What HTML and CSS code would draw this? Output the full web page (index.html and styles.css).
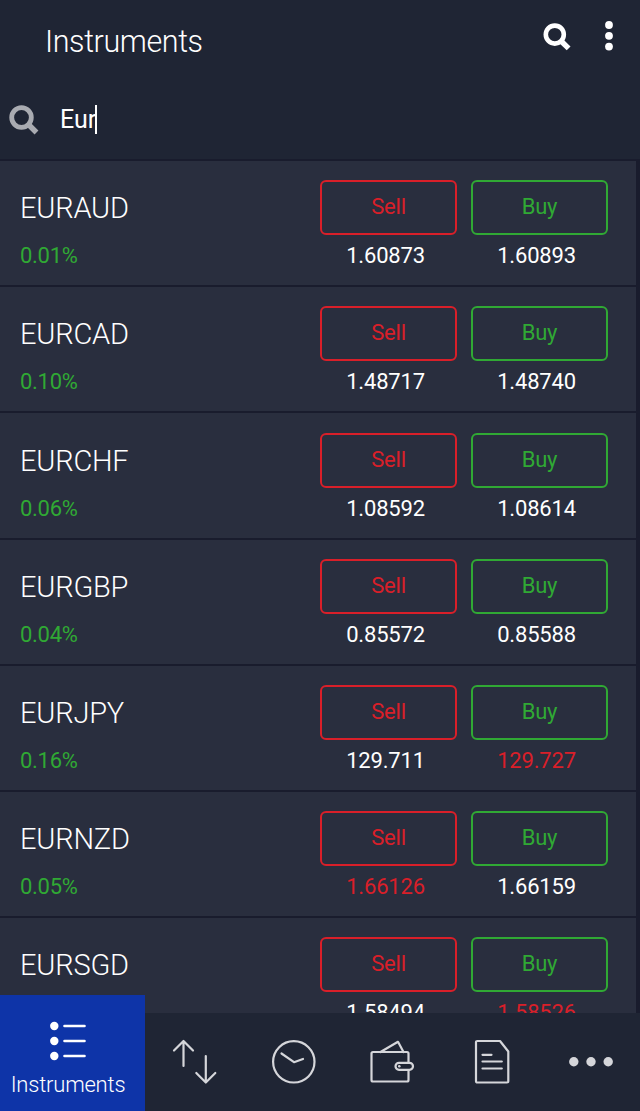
FILE: index.html
```html
<!DOCTYPE html>
<html lang="en">
<head>
  <meta charset="UTF-8" />
  <meta name="viewport" content="width=device-width, initial-scale=1" />
  <title>Instruments</title>
  <link rel="stylesheet" href="styles.css">
</head>
<body>
  <div class="app">
    <header class="header">
      <div class="topbar">
        <h1>Instruments</h1>
        <svg class="icon-search" width="28" height="28" viewBox="0 0 28 28">
          <circle cx="11.8" cy="11.6" r="9" fill="none" stroke="#fff" stroke-width="4.6" />
          <path d="M18 18L25.6 25.4" stroke="#fff" stroke-width="5.4" />
        </svg>
        <svg class="icon-menu" width="8" height="30" viewBox="0 0 8 30" fill="#fff">
          <circle cx="4" cy="4" r="3.900" />
          <circle cx="4" cy="14.800" r="3.900" />
          <circle cx="4" cy="25.600" r="3.900" />
        </svg>
      </div>
      <div class="search">
        <svg width="30" height="30" viewBox="0 0 30 30">
          <circle cx="12.500" cy="12.500" r="9.800" fill="none" stroke="#a9abb1" stroke-width="4.800" />
          <path d="M19 19L27.500 27.500" stroke="#a9abb1" stroke-width="5.400" />
        </svg>
        <span class="query">Eur</span><span class="caret"></span>
      </div>
    </header>

    <main class="list">
      <section class="row">
        <div class="info"><h2>EURAUD</h2><p>0.01%</p></div>
        <div class="quote sell"><button>Sell</button><span>1.60873</span></div>
        <div class="quote buy"><button>Buy</button><span>1.60893</span></div>
      </section>
      <section class="row">
        <div class="info"><h2>EURCAD</h2><p>0.10%</p></div>
        <div class="quote sell"><button>Sell</button><span>1.48717</span></div>
        <div class="quote buy"><button>Buy</button><span>1.48740</span></div>
      </section>
      <section class="row">
        <div class="info"><h2>EURCHF</h2><p>0.06%</p></div>
        <div class="quote sell"><button>Sell</button><span>1.08592</span></div>
        <div class="quote buy"><button>Buy</button><span>1.08614</span></div>
      </section>
      <section class="row">
        <div class="info"><h2>EURGBP</h2><p>0.04%</p></div>
        <div class="quote sell"><button>Sell</button><span>0.85572</span></div>
        <div class="quote buy"><button>Buy</button><span>0.85588</span></div>
      </section>
      <section class="row">
        <div class="info"><h2>EURJPY</h2><p>0.16%</p></div>
        <div class="quote sell"><button>Sell</button><span>129.711</span></div>
        <div class="quote buy"><button>Buy</button><span class="down">129.727</span></div>
      </section>
      <section class="row">
        <div class="info"><h2>EURNZD</h2><p>0.05%</p></div>
        <div class="quote sell"><button>Sell</button><span class="down">1.66126</span></div>
        <div class="quote buy"><button>Buy</button><span>1.66159</span></div>
      </section>
      <section class="row">
        <div class="info"><h2>EURSGD</h2></div>
        <div class="quote sell"><button>Sell</button><span>1.58494</span></div>
        <div class="quote buy"><button>Buy</button><span class="down">1.58526</span></div>
      </section>
    </main>

    <nav class="tabs">
      <a class="tab active">
        <svg width="36" height="40" viewBox="0 0 36 40">
          <g fill="#fff">
            <circle cx="4.3" cy="5" r="4.2" />
            <circle cx="4.3" cy="20" r="4.2" />
            <circle cx="4.3" cy="35" r="4.2" />
          </g>
          <path d="M14.5 5H34.5M14.5 20H34.5M14.5 35H34.5" stroke="#fff" stroke-width="2.6" stroke-linecap="round" />
        </svg>
        <span>Instruments</span>
      </a>
      <a class="tab">
        <svg width="46" height="46" viewBox="0 0 46 46">
          <path d="M11.5 27V2.5M2 11.5L11.500 2L21 11.500M33.800 17V43M24.300 34L33.800 43.500L43.300 34" />
        </svg>
      </a>
      <a class="tab">
        <svg width="46" height="46" viewBox="0 0 46 46">
          <circle cx="22.800" cy="22.800" r="20.700" />
          <path d="M10.500 14.500L23 23.200L32 20" />
        </svg>
      </a>
      <a class="tab">
        <svg width="46" height="46" viewBox="0 0 46 46">
          <path d="M38.500 24V14.500a1.500 1.500 0 0 0-1.500-1.500H3a1.500 1.500 0 0 0-1.500 1.500V41a1.500 1.500 0 0 0 1.500 1.500H37a1.500 1.500 0 0 0 1.500-1.500V31" />
          <path d="M10.500 13L28 2.800L33.500 13" />
          <rect x="25.500" y="23.800" width="17.500" height="7" rx="3.500" />
          <circle class="dot" cx="29.300" cy="27.300" r="1.300" />
        </svg>
      </a>
      <a class="tab">
        <svg width="36" height="46" viewBox="0 0 36 46">
          <path d="M3.300 2H26L34.300 12.500V42.200a1.300 1.300 0 0 1-1.300 1.300H3.300a1.300 1.300 0 0 1-1.300-1.300V3.300A1.300 1.300 0 0 1 3.300 2Z" />
          <path d="M8.500 15.800H17.500M8.500 22.500H27.800M8.500 29.500H27.800" />
        </svg>
      </a>
      <a class="tab">
        <svg class="more" width="44" height="10" viewBox="0 0 44 10">
          <circle cx="4.800" cy="4.800" r="4.700" />
          <circle cx="22" cy="4.800" r="4.700" />
          <circle cx="39.200" cy="4.800" r="4.700" />
        </svg>
      </a>
    </nav>
  </div>
</body>
</html>
```

FILE: styles.css
```css
* {
  box-sizing: border-box;
}

body {
  margin: 0;
  background: #1f2534;
  color: #fff;
  font-family: Roboto, sans-serif;
}

h1, h2, p {
  margin: 0;
}

.app {
  display: flex;
  flex-direction: column;
  height: 1111px;
  overflow: hidden;
}

.header {
  flex: none;
  height: 161px;
  border-bottom: 2px solid #191c2d;
}

.topbar {
  display: flex;
  align-items: flex-start;
  height: 100px;
  padding: 21px 27px 0 45px;
}

h1 {
  flex: 1;
  font-size: 30.500px;
  font-weight: 300;
  letter-spacing: -0.400px;
  line-height: 41px;
}

.icon-search {
  margin-top: 2px;
}

.icon-menu {
  margin-left: 34px;
}

.search {
  display: flex;
  align-items: center;
  height: 39px;
  padding-left: 9px;
}

.query {
  margin-left: 21px;
  margin-right: -1px;
  font-size: 25px;
  line-height: 38px;
}

.caret {
  width: 2px;
  height: 29px;
  background: #fff;
}

/* Price list */
.list {
  flex: 1;
  min-height: 0;
  overflow: hidden;
  border-right: 4px solid #191c2d;
  background: #292e3e;
}

.row {
  display: flex;
  height: 126.200px;
  padding: 19.300px 28px 0 20px;
  border-bottom: 2px solid #191c2d;
}

.info {
  flex: 1;
}

h2 {
  font-size: 29px;
  font-weight: 300;
  letter-spacing: -0.200px;
  line-height: 56px;
}

p {
  color: #30a934;
  font-size: 22px;
  letter-spacing: -0.300px;
  line-height: 40px;
}

.quote {
  width: 137px;
  margin-left: 14px;
}

button {
  display: block;
  width: 137px;
  height: 55px;
  padding: 0 0 2px;
  border: 2px solid;
  border-radius: 6px;
  background: none;
  font-family: inherit;
  font-size: 22px;
  letter-spacing: -0.200px;
}

.sell button {
  color: #d91f29;
}

.buy button {
  color: #30a934;
}

.quote span {
  display: block;
  padding-right: 6px;
  font-size: 22px;
  letter-spacing: -0.200px;
  line-height: 41px;
  text-align: center;
}

.quote .down {
  color: #d91f29;
}

/* Bottom tabs */
.tabs {
  flex: none;
  display: grid;
  grid-template-columns: 145px repeat(5, 99px);
  height: 98px;
  background: #1f2534;
}

.tab {
  display: flex;
  align-items: center;
  justify-content: center;
}

.tab svg {
  fill: none;
  stroke: #d5d6da;
  stroke-width: 2.200;
  stroke-linecap: round;
  stroke-linejoin: round;
}

.tab .more,
.tab .dot {
  fill: #d5d6da;
  stroke: none;
}

.tab.active {
  flex-direction: column;
  justify-content: flex-start;
  height: 116px;
  margin-top: -18px;
  padding: 26px 9px 0 0;
  background: #0e34a8;
}

.tab.active svg {
  stroke: none;
}

.tab.active span {
  margin-top: 8px;
  font-size: 22px;
  font-weight: 300;
  letter-spacing: -0.200px;
  line-height: 31px;
}
```
